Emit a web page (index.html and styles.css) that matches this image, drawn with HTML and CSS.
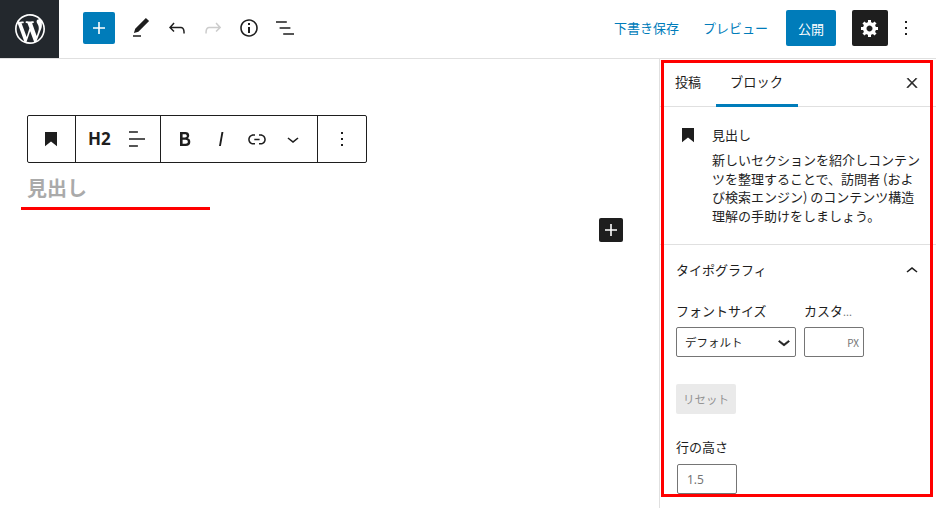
FILE: index.html
```html
<!DOCTYPE html>
<html lang="ja">
<head>
<meta charset="utf-8">
<title>見出し</title>
<link rel="stylesheet" href="styles.css">
</head>
<body>
<div class="app">
  <header class="topbar">
    <div class="logo"><svg class="logo-svg" viewBox="0 0 20 20"><path d="M20 10c0-5.51-4.49-10-10-10C4.48 0 0 4.49 0 10c0 5.52 4.48 10 10 10 5.51 0 10-4.48 10-10zM7.78 15.37L4.37 6.22c.55-.02 1.17-.08 1.17-.08.5-.06.44-1.13-.06-1.11 0 0-1.45.11-2.37.11-.18 0-.37 0-.58-.01C4.12 2.69 6.87 1.11 10 1.11c2.33 0 4.45.87 6.05 2.34-.68-.11-1.65.39-1.65 1.58 0 .74.45 1.36.9 2.1.35.61.55 1.36.55 2.46 0 1.49-1.4 5-1.4 5l-3.03-8.37c.54-.02.82-.17.82-.17.5-.05.44-1.25-.06-1.22 0 0-1.44.12-2.38.12-.87 0-2.33-.12-2.33-.12-.5-.03-.56 1.2-.06 1.22l.92.08 1.26 3.41zM17.41 10c.24-.64.74-1.87.43-4.25.7 1.29 1.05 2.71 1.05 4.25 0 3.29-1.73 6.24-4.4 7.78.97-2.59 1.94-5.2 2.92-7.78zM6.1 18.09C3.12 16.65 1.11 13.53 1.11 10c0-1.3.23-2.48.72-3.59C3.25 10.3 4.67 14.2 6.1 18.09zm4.03-6.63l2.58 6.98c-.86.29-1.76.45-2.71.45-.79 0-1.57-.11-2.29-.33.81-2.38 1.62-4.74 2.42-7.1z"/></svg></div>
    <div class="tools">
      <button class="add"><svg class="ic" viewBox="0 0 24 24"><path d="M18 11.2h-5.2V6h-1.6v5.2H6v1.6h5.2V18h1.6v-5.2H18z"/></svg></button>
      <span class="tool"><svg class="ic" viewBox="0 0 24 24"><path d="M20.1 5.1L16.9 2 6.2 12.7l-1.3 4.4 4.5-1.3L20.1 5.1zM4 20.8h8v-1.5H4v1.5z"/></svg></span>
      <span class="tool"><svg class="ic" viewBox="0 0 24 24"><path d="M18.3 11.7c-.6-.6-1.4-.9-2.3-.9H6.7l2.9-3.3-1.1-1-4.5 5L8.5 16l1-1-2.7-2.7H16c.5 0 .9.2 1.3.5 1 1 1 3.4 1 4.5v.3h1.5v-.2c0-1.5 0-4.3-1.5-5.7z"/></svg></span>
      <span class="tool off"><svg class="ic" viewBox="0 0 24 24"><path d="M15.6 6.5l-1.1 1 2.9 3.3H8c-.9 0-1.7.3-2.3.9-1.4 1.5-1.4 4.2-1.4 5.6v.2h1.5v-.3c0-1.1 0-3.5 1-4.5.3-.3.7-.5 1.3-.5h9.2L14.5 15l1.1 1.1 4.6-4.6-4.6-5z"/></svg></span>
      <span class="tool"><svg class="ic" viewBox="0 0 24 24"><path d="M12 3.2c-4.8 0-8.8 3.9-8.8 8.8 0 4.8 3.9 8.8 8.8 8.8 4.8 0 8.8-3.9 8.8-8.8 0-4.8-4-8.8-8.8-8.8zm0 16c-4 0-7.2-3.3-7.2-7.2C4.8 8 8 4.8 12 4.8s7.2 3.3 7.2 7.2c0 4-3.2 7.2-7.2 7.2zM11 17h2v-6h-2v6zm0-8h2V7h-2v2z"/></svg></span>
      <span class="tool"><svg class="ic" viewBox="0 0 24 24"><path d="M13.8 5.2H3v1.5h10.8V5.2zm-3.6 12v1.5H21v-1.5H10.2zm7.2-6H6.6v1.5h10.8v-1.5z"/></svg></span>
    </div>
    <div class="actions">
      <a class="link save">下書き保存</a>
      <a class="link preview">プレビュー</a>
      <button class="publish">公開</button>
      <button class="settings"><svg class="ic-cog" viewBox="0 0 20 20"><path d="M18 12h-2.18c-.17.7-.44 1.35-.81 1.93l1.54 1.54-2.1 2.1-1.54-1.54c-.58.36-1.23.63-1.91.79V19H8v-2.18c-.68-.16-1.33-.43-1.91-.79l-1.54 1.54-2.12-2.12 1.54-1.54c-.36-.58-.63-1.23-.79-1.91H1V9.03h2.17c.16-.7.44-1.35.8-1.94L2.43 5.55l2.1-2.1 1.54 1.54c.58-.37 1.24-.64 1.93-.81V2h3v2.18c.68.16 1.33.43 1.91.79l1.54-1.54 2.12 2.12-1.54 1.54c.36.59.64 1.24.8 1.94H18V12zm-8.5 1.5c1.66 0 3-1.34 3-3s-1.34-3-3-3-3 1.34-3 3 1.34 3 3 3z"/></svg></button>
      <span class="more"><svg class="ic" viewBox="0 0 24 24"><path d="M13 19h-2v-2h2v2zm0-6h-2v-2h2v2zm0-6h-2V5h2v2z"/></svg></span>
    </div>
  </header>

  <div class="body">
    <main class="editor">
      <div class="block-toolbar">
        <div class="group g-type"><svg class="ic" viewBox="0 0 24 24"><path d="M6 5h12v14.2l-6-4.7-6 4.7z"/></svg></div>
        <div class="group g-head"><span class="h2">H2</span><svg class="ic" viewBox="0 0 24 24"><path d="M4 19.8h8.9v-1.5H4v1.5zm8.9-15.6H4v1.5h8.9V4.2zm-8.9 7v1.5h16v-1.5H4z"/></svg></div>
        <div class="group g-format">
          <svg class="ic" viewBox="0 0 24 24"><path d="M14.7 11.3c1-.6 1.5-1.6 1.5-3 0-2.3-1.3-3.4-4-3.4H7v14h5.8c1.4 0 2.5-.3 3.3-1 .8-.7 1.2-1.7 1.2-2.9.1-1.9-.8-3.1-2.6-3.7zm-5.1-4h2.3c.6 0 1.1.1 1.4.4.3.3.5.7.5 1.2s-.2 1-.5 1.2c-.3.3-.8.4-1.4.4H9.6V7.3zm4.6 9c-.4.3-1 .4-1.7.4H9.6v-3.9h2.9c.7 0 1.3.2 1.7.5.4.3.6.8.6 1.5s-.2 1.2-.6 1.5z"/></svg>
          <svg class="ic" viewBox="0 0 24 24"><path d="M12.5 5L10 19h1.9l2.5-14z"/></svg>
          <svg class="ic" viewBox="0 0 24 24"><path d="M15.6 7.2H14v1.5h1.6c2 0 3.7 1.7 3.7 3.7s-1.7 3.7-3.7 3.7H14v1.5h1.6c2.8 0 5.2-2.3 5.2-5.2 0-2.9-2.3-5.2-5.2-5.2zM4.7 12.4c0-2 1.7-3.7 3.7-3.7H10V7.2H8.4c-2.9 0-5.2 2.3-5.2 5.2 0 2.9 2.3 5.2 5.2 5.2H10v-1.5H8.4c-2 0-3.7-1.7-3.7-3.7zm4.6.9h5.3v-1.5H9.3v1.5z"/></svg>
          <svg class="ic" viewBox="0 0 24 24"><path d="M17.5 11.6L12 16l-5.5-4.4.9-1.2L12 14l4.5-3.6 1 1.2z"/></svg>
        </div>
        <div class="group g-more"><svg class="ic" viewBox="0 0 24 24"><path d="M13 19h-2v-2h2v2zm0-6h-2v-2h2v2zm0-6h-2V5h2v2z"/></svg></div>
      </div>
      <h2 class="placeholder">見出し</h2>
      <div class="inserter-row"><button class="inserter"><svg class="ic-light" viewBox="0 0 24 24"><path d="M18 11.2h-5.2V6h-1.6v5.2H6v1.6h5.2V18h1.6v-5.2H18z"/></svg></button></div>
      <div class="mark-line"></div>
    </main>

    <aside class="sidebar">
      <div class="tabs">
        <span class="tab">投稿</span>
        <span class="tab active">ブロック</span>
        <svg class="close" viewBox="0 0 24 24"><path d="M13 11.8l6.1-6.3-1-1-6.1 6.2-6.1-6.2-1 1 6.1 6.3-6.5 6.7 1 1 6.5-6.6 6.5 6.6 1-1z"/></svg>
      </div>
      <section class="card">
        <svg class="ic card-icon" viewBox="0 0 24 24"><path d="M6 5h12v14.2l-6-4.7-6 4.7z"/></svg>
        <div>
          <div class="card-title">見出し</div>
          <p class="card-desc">新しいセクションを紹介しコンテンツを整理することで、訪問者 (および検索エンジン) のコンテンツ構造理解の手助けをしましょう。</p>
        </div>
      </section>
      <section class="panel">
        <div class="panel-head"><span class="panel-title">タイポグラフィ</span><svg class="ic panel-chev" viewBox="0 0 24 24"><path d="M6.5 12.4L12 8l5.5 4.4-.9 1.2L12 10l-4.5 3.6-1-1.2z"/></svg></div>
        <div class="size-row">
          <div class="field-a">
            <div class="label">フォントサイズ</div>
            <div class="select"><span>デフォルト</span><svg class="ic chev" viewBox="0 0 24 24"><path d="M17.5 11.6L12 16l-5.5-4.4.9-1.2L12 14l4.5-3.6 1 1.2z"/></svg></div>
          </div>
          <div class="field-b">
            <div class="label">カスタ<span class="dots">...</span></div>
            <div class="unit-input"><span>PX</span></div>
          </div>
        </div>
        <button class="reset">リセット</button>
        <div class="label lh-label">行の高さ</div>
        <div class="lh-input">1.5</div>
      </section>
      <div class="red-box"></div>
    </aside>
  </div>
</div>
</body>
</html>
```

FILE: styles.css
```css
* { box-sizing: border-box; }
html, body { margin: 0; height: 100%; overflow: hidden; background: #fff; }
body { font-family: "Noto Sans CJK JP", "Noto Sans", sans-serif; font-size: 13px; color: #1e1e1e; }
button { font: inherit; border: 0; padding: 0; margin: 0; }

.app { width: 936px; height: 508px; display: flex; flex-direction: column; overflow: hidden; }
.ic { width: 24px; height: 24px; fill: #1e1e1e; display: block; flex: none; }

.topbar { height: 59px; flex: none; display: flex; align-items: center; border-bottom: 1px solid #e0e0e0; }
.logo { width: 59px; height: 58px; background: #23282d; display: flex; align-items: center; justify-content: center; flex: none; }
.logo-svg { width: 30px; height: 30px; fill: #fff; display: block; }
.tools { display: flex; align-items: center; margin-left: 24px; margin-bottom: 2px; }
.add { width: 32px; height: 32px; background: #007cba; border-radius: 2px; display: flex; align-items: center; justify-content: center; margin-right: 8px; }
.add .ic { fill: #fff; }
.tool { width: 36px; height: 36px; display: flex; align-items: center; justify-content: center; }
.tool.off .ic { fill: #ccc; }
.actions { margin-left: auto; margin-bottom: 2px; display: flex; align-items: center; }
.link { color: #007cba; font-size: 13px; line-height: 18px; white-space: nowrap; }
.save { margin-right: 24px; }
.preview { margin-right: 18px; }
.publish { width: 50px; height: 36px; background: #007cba; color: #fff; border-radius: 2px; font-size: 13px; margin-right: 16px; }
.settings { width: 36px; height: 36px; background: #1e1e1e; border-radius: 2px; display: flex; align-items: center; justify-content: center; }
.ic-cog { width: 20px; height: 20px; fill: #fff; display: block; }
.more { width: 36px; display: flex; justify-content: center; margin-right: 12px; }

.body { flex: 1; display: flex; min-height: 0; }
.editor { flex: 1; position: relative; padding: 56px 0 0 27px; min-width: 0; }
.block-toolbar { width: 340px; height: 48px; border: 1px solid #1e1e1e; border-radius: 2px; display: flex; }
.group { height: 100%; display: flex; align-items: center; border-right: 1px solid #1e1e1e; }
.group:last-child { border-right: 0; }
.g-type { width: 48px; justify-content: center; padding-right: 2px; }
.g-head { width: 85px; padding-left: 12px; gap: 8px; }
.h2 { font-family: "Noto Sans", sans-serif; font-weight: 700; font-size: 17px; line-height: 20px; width: 29px; }
.g-format { width: 157px; padding-left: 12px; gap: 12px; }
.g-more { flex: 1; justify-content: center; }
.placeholder { margin: 10px 0 0; color: #aaa; font-size: 20px; font-weight: 700; line-height: 30px; }
.inserter-row { display: flex; justify-content: flex-end; margin-top: 15px; padding-right: 36px; }
.inserter { width: 24px; height: 24px; background: #1e1e1e; border-radius: 2px; display: block; padding: 0; }
.ic-light { width: 24px; height: 24px; fill: #fff; display: block; }
.mark-line { position: absolute; left: 21px; top: 148px; width: 189px; height: 3px; background: #f00; }

.sidebar { width: 277px; flex: none; border-left: 1px solid #e0e0e0; position: relative; overflow: hidden; }
.red-box { position: absolute; left: 1px; top: 1px; width: 272px; height: 437px; border: 3px solid #f00; pointer-events: none; }
.tabs { height: 48px; display: flex; align-items: center; border-bottom: 1px solid #e0e0e0; padding-left: 15px; }
.tab { line-height: 45px; height: 48px; }
.tab.active { margin-left: 15px; padding-left: 14px; border-bottom: 3px solid #007cba; width: 82px; font-size: 13.25px; }
.close { width: 16px; height: 16px; fill: #1e1e1e; stroke: #1e1e1e; stroke-width: 1; display: block; flex: none; margin-left: auto; margin-right: 16px; }
.card { display: flex; padding: 16px; border-bottom: 1px solid #e0e0e0; height: 138px; }
.card-icon { margin-right: 12px; }
.card-title { font-size: 13px; line-height: 18px; margin-top: 3px; }
.card-desc { margin: 7px 0 0; font-size: 13px; line-height: 18.6px; width: 212px; }

.panel { padding-left: 16px; }
.panel-head { height: 50px; display: flex; align-items: center; justify-content: space-between; padding-right: 12px; }
.panel-title { margin-bottom: 2px; }
.panel-chev { margin-top: 1px; }
.size-row { display: flex; margin-top: 7px; gap: 8px; }
.label { font-size: 13px; line-height: 18px; }
.dots { font-family: "Noto Sans", sans-serif; font-size: 11px; color: #757575; }
.field-a { width: 120px; }
.field-b { width: 60px; }
.select { margin-top: 7px; height: 30px; border: 1px solid #757575; border-radius: 2px; display: flex; align-items: center; justify-content: space-between; padding-left: 8px; font-size: 11.5px; }
.chev { margin-right: -1px; stroke: #1e1e1e; stroke-width: .6; }
.unit-input { margin-top: 7px; height: 30px; position: relative; top: -1px; border: 1px solid #757575; border-radius: 2px; display: flex; align-items: center; justify-content: flex-end; padding-right: 4px; font-size: 10px; color: #757575; }
.reset { display: block; margin-top: 26px; width: 60px; height: 30px; background: #eaeaea; color: #949494; border-radius: 2px; font-size: 11.5px; }
.lh-label { margin-top: 24px; }
.lh-input { margin: 8px 0 0 1px; width: 60px; height: 30px; border: 1px solid #757575; border-radius: 2px; padding-left: 9px; color: #757575; font-size: 12px; line-height: 30px; font-family: "Noto Sans", sans-serif; }
```
